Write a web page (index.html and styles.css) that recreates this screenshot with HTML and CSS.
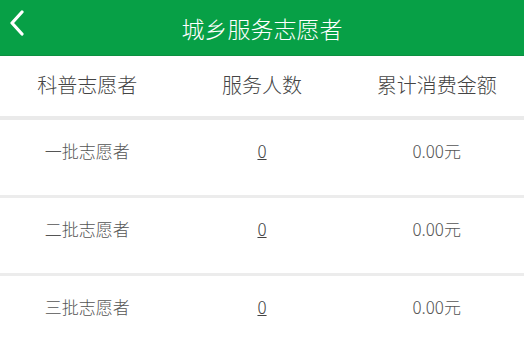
FILE: index.html
```html
<!DOCTYPE html>
<html lang="zh-CN">
<head>
    <meta charset="UTF-8">
    <meta name="viewport" content="width=device-width, initial-scale=1.0">
    <title>城乡服务志愿者</title>
    <link rel="stylesheet" href="styles.css">
</head>
<body>

<div class="topbar">
    <a class="back" href="#">
        <svg width="16" height="26" viewBox="0 0 16 26">
            <path d="M13 2 L3 13 L13 24" fill="none" stroke="#fff" stroke-width="3.2" stroke-linecap="round" stroke-linejoin="round"/>
        </svg>
    </a>
    <h1>城乡服务志愿者</h1>
</div>

<div class="list">
    <div class="row head">
        <div class="cell">科普志愿者</div>
        <div class="cell">服务人数</div>
        <div class="cell">累计消费金额</div>
    </div>
    <div class="row">
        <div class="cell">一批志愿者</div>
        <div class="cell"><a href="#">0</a></div>
        <div class="cell">0.00元</div>
    </div>
    <div class="row">
        <div class="cell">二批志愿者</div>
        <div class="cell"><a href="#">0</a></div>
        <div class="cell">0.00元</div>
    </div>
    <div class="row">
        <div class="cell">三批志愿者</div>
        <div class="cell"><a href="#">0</a></div>
        <div class="cell">0.00元</div>
    </div>
</div>

</body>
</html>
```

FILE: styles.css
```css
body {
    margin: 0;
    font-family: "Noto Sans CJK SC", "Noto Sans", sans-serif;
    font-weight: 300;
    background-color: #fff;
}

.topbar {
    position: relative;
    height: 55px;
    background-color: #07a046;
    border-bottom: 1px solid #0c8f40;
    display: flex;
    align-items: center;
    justify-content: center;
}

.topbar h1 {
    margin: 0;
    font-size: 23px;
    font-weight: 300;
    color: #fff;
}

.back {
    position: absolute;
    left: 9px;
    top: 10px;
    display: block;
}

.back svg {
    display: block;
}

.row {
    display: flex;
    border-top: 3px solid #ececec;
    padding: 20px 0 33px;
    line-height: 22px;
    font-size: 17px;
    color: #555;
}

.row.head {
    border-top: none;
    padding: 18px 0 20px;
    font-size: 20px;
    color: #444;
}

.row.head + .row {
    border-top: 4px solid #eaeaea;
}

.cell {
    flex: 1;
    text-align: center;
}

.cell a {
    color: #444;
    text-decoration: underline;
}
```
